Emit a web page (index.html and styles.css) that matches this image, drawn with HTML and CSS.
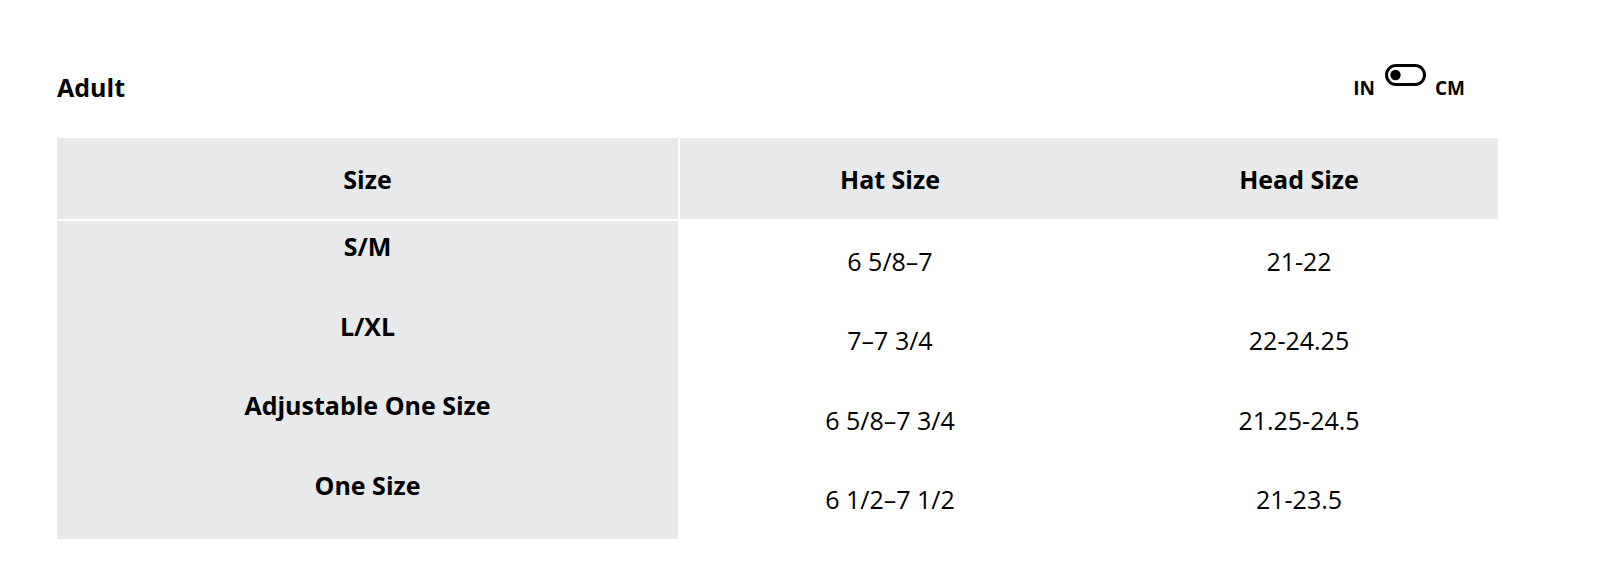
FILE: index.html
```html
<!DOCTYPE html>
<html lang="en">
<head>
<meta charset="utf-8">
<title>Size Chart</title>
<link rel="stylesheet" href="styles.css">
</head>
<body>
<main class="page">
  <section class="chart">
    <div class="chart-top">
      <h2 class="chart-title">Adult</h2>
      <div class="unit-toggle">
        <span class="unit-label">IN</span>
        <svg class="toggle-icon" width="41" height="22" viewBox="0 0 41 22" aria-hidden="true">
          <rect x="1.5" y="1.5" width="38" height="19" rx="9.5" ry="9.5" fill="none" stroke="#000" stroke-width="3"/>
          <circle cx="10.5" cy="11" r="5.2" fill="#000"/>
        </svg>
        <span class="unit-label">CM</span>
      </div>
    </div>
    <table class="size-table">
      <colgroup>
        <col class="col-size">
        <col class="col-hat">
        <col class="col-head">
      </colgroup>
      <thead>
        <tr>
          <th class="th-size">Size</th>
          <th>Hat Size</th>
          <th>Head Size</th>
        </tr>
      </thead>
      <tbody>
        <tr>
          <th class="row-label">S/M</th>
          <td>6 5/8–7</td>
          <td>21-22</td>
        </tr>
        <tr>
          <th class="row-label">L/XL</th>
          <td>7–7 3/4</td>
          <td>22-24.25</td>
        </tr>
        <tr>
          <th class="row-label">Adjustable One Size</th>
          <td>6 5/8–7 3/4</td>
          <td>21.25-24.5</td>
        </tr>
        <tr>
          <th class="row-label">One Size</th>
          <td>6 1/2–7 1/2</td>
          <td>21-23.5</td>
        </tr>
      </tbody>
    </table>
  </section>
  <section class="chart">
    <div class="chart-top">
      <h2 class="chart-title">Kids</h2>
    </div>
  </section>
</main>
</body>
</html>
```

FILE: styles.css
```css
html, body {
  margin: 0;
  padding: 0;
  background: #fff;
}

body {
  font-family: "Open Sans", "Noto Sans", "Liberation Sans", sans-serif;
  color: #000;
  overflow: hidden;
}

.page {
  padding: 71px 102px 0 57px;
}

.chart + .chart {
  margin-top: 34px;
}

.chart-top {
  display: flex;
  justify-content: space-between;
  align-items: flex-start;
  padding-right: 33px;
}

.chart-title {
  margin: 0;
  font-size: 25px;
  line-height: 32px;
  font-weight: 700;
}

.unit-toggle {
  display: flex;
  align-items: flex-start;
  margin-top: 5px;
}

.unit-label {
  font-size: 19px;
  line-height: 24px;
  font-weight: 700;
}

.toggle-icon {
  display: block;
  margin: -12px 9px 0 10px;
}

.size-table {
  margin-top: 35px;
  width: 1441px;
  table-layout: fixed;
  border-collapse: separate;
  border-spacing: 0;
  font-size: 25px;
  line-height: 32px;
}

.col-size { width: 623px; }
.col-hat { width: 420px; }
.col-head { width: 398px; }

.size-table thead th {
  background: #e8e9eb;
  font-weight: 700;
  text-align: center;
  height: 83px;
  padding: 0;
  box-sizing: border-box;
  border-bottom: 2px solid #fff;
  vertical-align: middle;
}

.size-table thead .th-size {
  border-right: 2px solid #fff;
}

.size-table tbody tr {
  height: 79.5px;
}

.size-table tbody td {
  padding: 0;
  text-align: center;
  font-weight: 400;
  vertical-align: middle;
}

.size-table .row-label {
  background: #e8e9eb;
  border-right: 2px solid #fff;
  font-weight: 700;
  text-align: center;
  vertical-align: top;
  padding: 9px 0 0 0;
}
```
